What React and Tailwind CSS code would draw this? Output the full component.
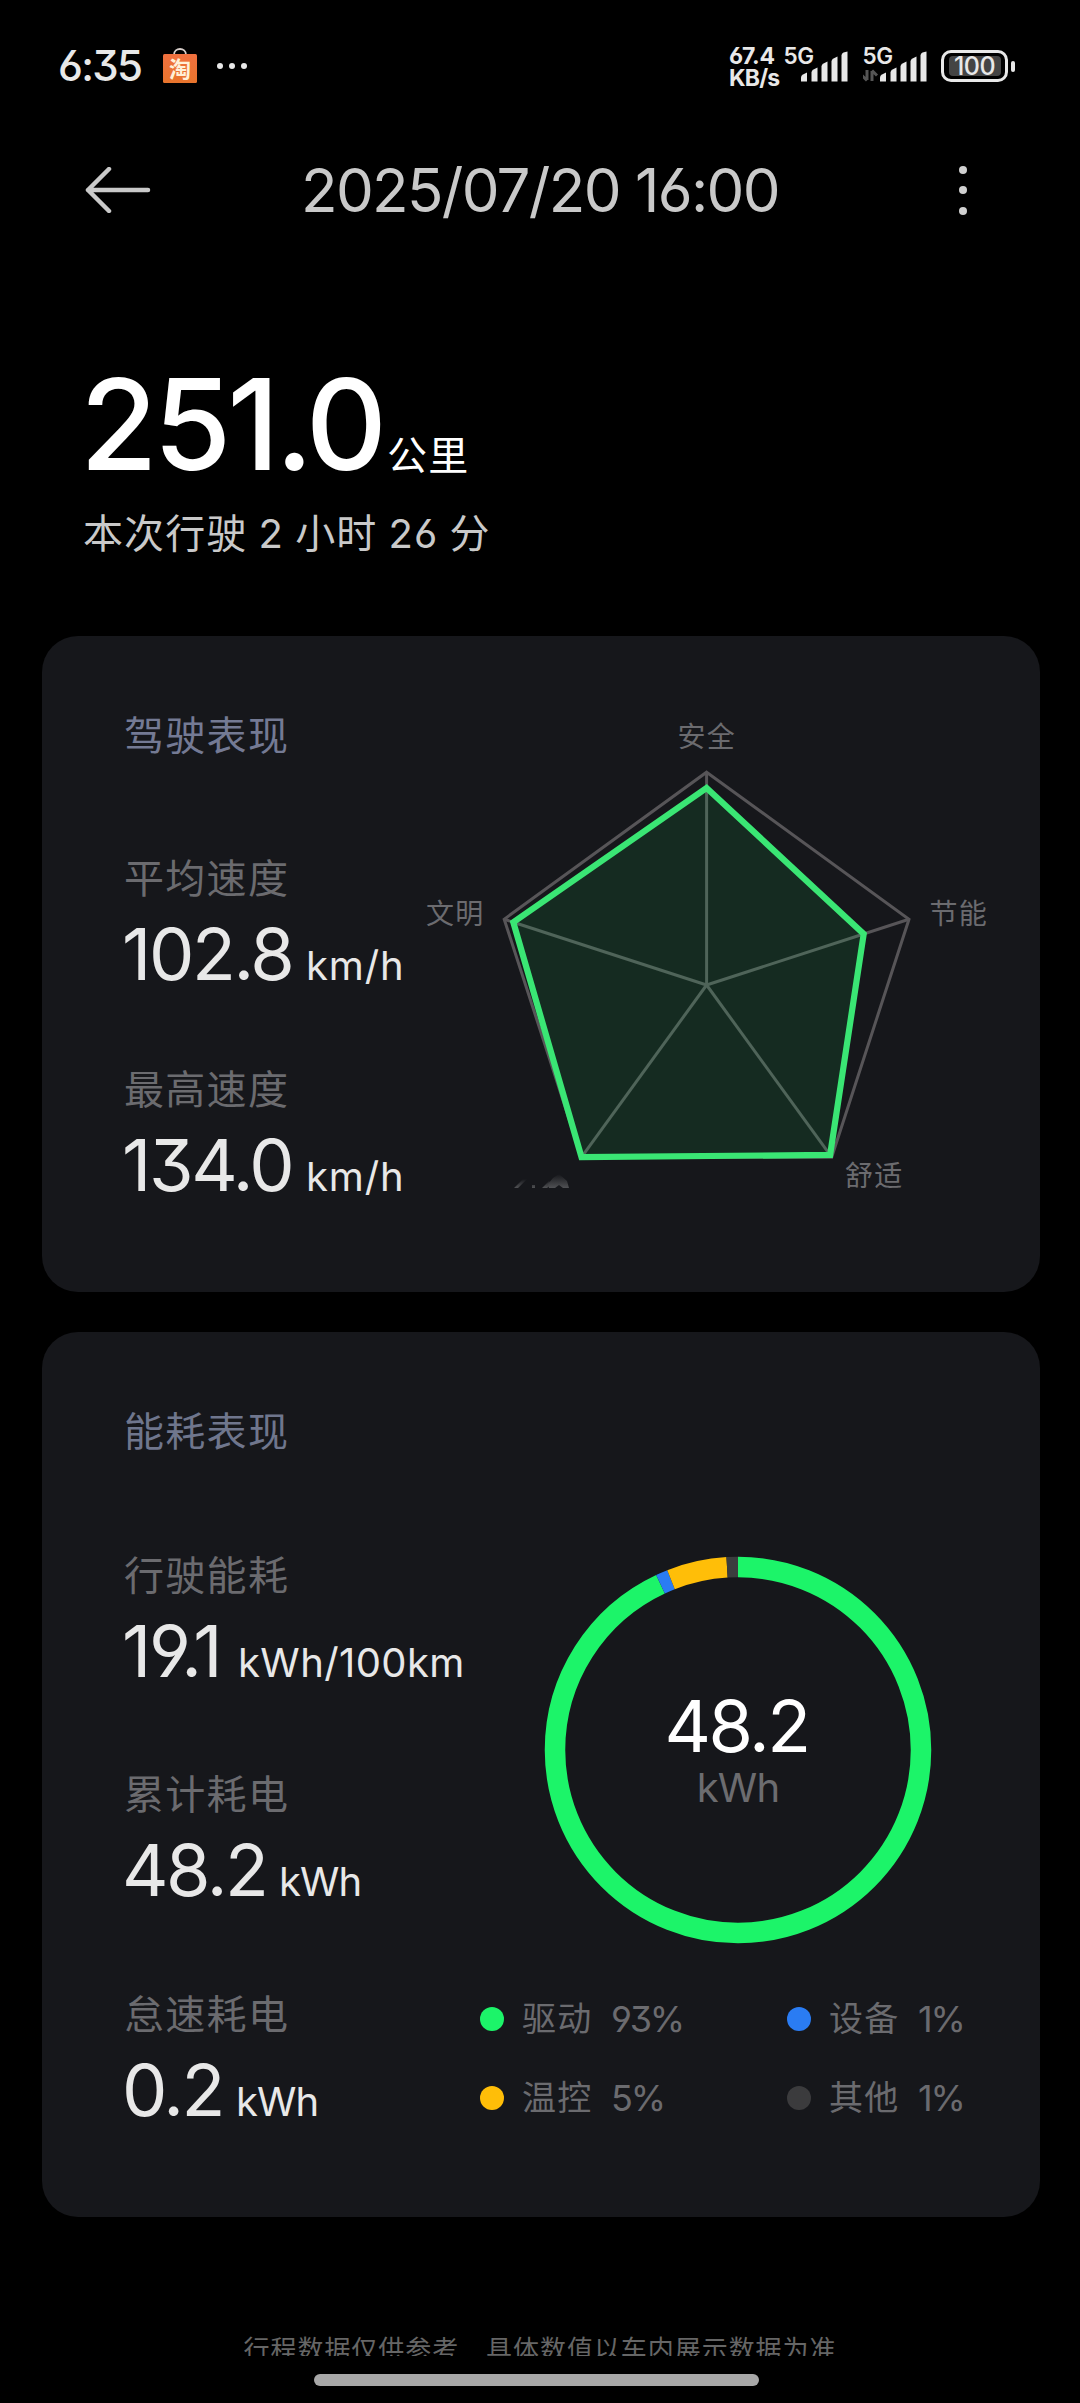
const FONT = "font-['Inter','Noto_Sans_CJK_SC',sans-serif]";

const RADAR = { cx: 286.6, cy: 285, r: 212.8 };
const SCORES = [0.926, 0.776, 0.987, 1, 0.955];

function radarPoint(index, ratio) {
  const a = ((-90 + index * 72) * Math.PI) / 180;
  return [
    RADAR.cx + Math.cos(a) * RADAR.r * ratio,
    RADAR.cy + Math.sin(a) * RADAR.r * ratio,
  ];
}

const ring = [0, 1, 2, 3, 4];
const toPoints = (pts) => pts.map((p) => p.map((v) => v.toFixed(1)).join(',')).join(' ');

function Radar() {
  return (
    <svg width="600" height="520" viewBox="0 0 600 520" className="shrink-0">
      <g stroke="#575558" strokeWidth="3" fill="none">
        <polygon points={toPoints(ring.map((i) => radarPoint(i, 1)))} />
        {ring.map((i) => {
          const [x, y] = radarPoint(i, 1);
          return <line key={i} x1={RADAR.cx} y1={RADAR.cy} x2={x} y2={y} />;
        })}
      </g>
      <polygon points={toPoints(ring.map((i) => radarPoint(i, SCORES[i])))} fill="#152b21" />
      <g stroke="#4f6459" strokeWidth="3">
        {ring.map((i) => {
          const [x, y] = radarPoint(i, SCORES[i]);
          return <line key={i} x1={RADAR.cx} y1={RADAR.cy} x2={x} y2={y} />;
        })}
      </g>
      <polygon
        points={toPoints(ring.map((i) => radarPoint(i, SCORES[i])))}
        fill="none"
        stroke="#3ae674"
        strokeWidth="6.2"
      />
      <g fill="#6b6b6f" fontSize="28" letterSpacing="1.3">
        <text x="257.5" y="46.5">安全</text>
        <text x="509.5" y="223.5">节能</text>
        <text x="425" y="486">舒适</text>
        <text x="6" y="223.5">文明</text>
      </g>
      <defs>
        <linearGradient id="fade" x1="0" y1="0" x2="0" y2="1">
          <stop offset="0" stopColor="#16171b" />
          <stop offset="1" stopColor="#505154" />
        </linearGradient>
      </defs>
      <g fill="url(#fade)">
        <path d="M94 488l9-9 4 0-9 9zM112 488v-3h3v3zM122 488l7-7 3 3-5 4z" />
        <path d="M128 484l5-6 6-4 8 7 2 7h-6l-4-3-4 3h-6z" />
      </g>
    </svg>
  );
}

const C = 2 * Math.PI * 183;
const SEGMENTS = [
  { from: 0, share: 93, color: '#1cf469' },
  { from: 93, share: 1, color: '#2a7cf3' },
  { from: 94, share: 5, color: '#ffbe08' },
  { from: 99, share: 1, color: '#3b3d3e' },
];

function Donut() {
  return (
    <div className="relative h-[388px] w-[388px]">
      <svg width="388" height="388" viewBox="0 0 388 388">
        <g transform="rotate(-90 194 194)" fill="none" strokeWidth="20.5">
          {SEGMENTS.map((s) => (
            <circle
              key={s.from}
              cx="194"
              cy="194"
              r="183"
              stroke={s.color}
              strokeDasharray={`${(C * s.share) / 100} ${C}`}
              strokeDashoffset={(-C * s.from) / 100}
            />
          ))}
        </g>
      </svg>
      <div className="absolute inset-0 flex flex-col items-center pt-[134px]">
        <div className="mr-[3px] text-[72px] leading-[72px] tracking-[-2.500px] text-white">48.2</div>
        <div className="mt-[2px] text-[40px] leading-[48px] tracking-[-0.8px] text-[#6c6c6f]">kWh</div>
      </div>
    </div>
  );
}

function Label({ children, className = 'text-[#6b6b6f]' }) {
  return (
    <div className={`text-[40px] leading-[48px] tracking-[1.3px] ${className}`}>
      {children}
    </div>
  );
}

function Metric({ label, value, unit, width, unitClass = '', className = '' }) {
  return (
    <div className={className}>
      <Label>{label}</Label>
      <div className="mt-[15px] -ml-[2px] flex h-[72px] items-baseline whitespace-nowrap leading-[72px] text-[#e8e8e8]">
        <span className={`text-[72px] tracking-[-2.400px] ${width}`}>{value}</span>
        <span className={`text-[40px] ${unitClass}`}>{unit}</span>
      </div>
    </div>
  );
}

function Legend({ dot, name, value }) {
  return (
    <div className="flex h-[79px] items-center text-[34px] text-[#6b6b6f]">
      <span className={`h-6 w-6 rounded-full ${dot}`} />
      <span className="ml-[18px] w-[89px] tracking-[1.3px]">{name}</span>
      <span className="text-[36px] tracking-[-2.200px]">{value}</span>
    </div>
  );
}

function Signal({ arrows }) {
  return (
    <svg width="67" height="48" viewBox="0 -8 67 48" className="-mt-[8px] shrink-0">
      <text x="-0.5" y="19.500" fontSize="22.5" fontWeight="600" fill="#e8e8e8" letterSpacing="-0.4">5G</text>
      <g fill="#e8e8e8">
        <path d="M17 37.500v-4q0-2 2-3l4-2v9z" />
        <path d="M27.500 37.500v-9q0-2 2-3l4-2v14z" />
        <path d="M37.500 37.500v-15q0-2 2-3l4-2v20z" />
        <path d="M47.500 37.500v-20q0-2 2-3l4-2v25z" />
        <path d="M57.500 37.500v-26q0-2 2-3l4-1v30z" />
      </g>
      {arrows && (
        <path d="M4 26v10M4 36.500l-5-5M9 37v-10M9 26.500l5 5" stroke="#555" strokeWidth="3" fill="none" />
      )}
    </svg>
  );
}

function StatusBar() {
  return (
    <div className="flex h-[132px] items-start pt-[44px] pl-[58px] text-[#e8e8e8]">
      <div className="w-[105px] text-[42px] leading-[44px] font-medium tracking-[-1.700px]">6:35</div>
      <svg width="34" height="40" viewBox="0 0 34 40">
        <defs>
          <linearGradient id="bag" x1="0" y1="0" x2="0" y2="1">
            <stop offset="0" stopColor="#f0703f" />
            <stop offset="1" stopColor="#e8742c" />
          </linearGradient>
        </defs>
        <path d="M11 11c0-8 12-8 12 0" fill="none" stroke="#d8cfcb" strokeWidth="1.800" />
        <rect y="10" width="34" height="29" rx="1.500" fill="url(#bag)" />
        <text x="6" y="33" fontSize="22" fontWeight="700" fill="#fff0d8">淘</text>
      </svg>
      <div className="mt-[19px] ml-[20px] flex gap-[6px]">
        <i className="h-[6px] w-[6px] rounded-full bg-[#e8e8e8]" />
        <i className="h-[6px] w-[6px] rounded-full bg-[#e8e8e8]" />
        <i className="h-[6px] w-[6px] rounded-full bg-[#e8e8e8]" />
      </div>
      <div className="mt-[1px] ml-[482px] w-[55px] text-[23px] leading-[22px] font-bold">
        <div className="tracking-[-0.300px]">67.4</div>
        <div className="tracking-[-0.800px]">KB/s</div>
      </div>
      <Signal />
      <div className="ml-[12px] flex"><Signal arrows /></div>
      <div className="mt-[6px] ml-[11px] flex items-center gap-[3px]">
        <div className="flex h-[32px] w-[67px] items-center justify-center rounded-[10px] border-[3.500px] border-[#e8e8e8]">
          <div className="flex h-[20px] w-[52px] items-center justify-center rounded-[4px] bg-[#444] text-[25px] leading-[20px] font-medium tracking-[-0.500px]">
            100
          </div>
        </div>
        <div className="h-[11px] w-[4px] rounded-[2px] bg-[#e8e8e8]" />
      </div>
    </div>
  );
}

export default function App() {
  return (
    <div className={`flex h-[2403px] w-[1080px] flex-col overflow-hidden bg-black [font-feature-settings:'cv03','cv04','cv09'] ${FONT}`}>
      <StatusBar />
      <header className="flex h-[116px] items-center pl-[85px]">
        <svg width="66" height="46" viewBox="0 0 66 46" fill="none" stroke="#c9c9c9" strokeWidth="4.500" strokeLinecap="round" strokeLinejoin="round">
          <path d="M24 2L3 23l21 21M3 23h60" />
        </svg>
        <h1 className="ml-[150px] w-[658px] text-[60px] leading-[72px] tracking-[-1.700px] whitespace-nowrap text-[#c9c9c9]">
          2025/07/20 16:00
        </h1>
        <div className="flex flex-col gap-[12.500px]">
          <i className="h-[8px] w-[8px] rounded-full bg-[#d0d0d0]" />
          <i className="h-[8px] w-[8px] rounded-full bg-[#d0d0d0]" />
          <i className="h-[8px] w-[8px] rounded-full bg-[#d0d0d0]" />
        </div>
      </header>

      <section className="h-[388px] pt-[112px] pl-[80px] text-white">
        <div className="flex h-[128px] items-baseline leading-[128px]">
          <span className="w-[307px] text-[126px] font-medium tracking-[-4.200px]">251.0</span>
          <span className="text-[40px] tracking-[1.300px]">公里</span>
        </div>
        <div className="mt-[22px] ml-[3px] text-[40px] leading-[48px] tracking-[1.100px] text-[#c9c9c9] [word-spacing:-1.200px]">
          本次行驶 2 小时 26 分
        </div>
      </section>

      <section className="mr-[40px] ml-[42px] flex h-[656px] rounded-[36px] bg-[#16171b]">
        <div className="w-[378px] shrink-0 pt-[76px] pl-[82px]">
          <Label className="text-[#747a94]">驾驶表现</Label>
          <Metric className="mt-[95px]" label="平均速度" value="102.8" unit="km/h" width="w-[184px]" unitClass="tracking-[0.900px]" />
          <Metric className="mt-[76px]" label="最高速度" value="134.0" unit="km/h" width="w-[184px]" unitClass="tracking-[0.900px]" />
        </div>
        <div className="pt-[64px]"><Radar /></div>
      </section>

      <section className="mt-[40px] mr-[40px] ml-[42px] flex h-[885px] rounded-[36px] bg-[#16171b]">
        <div className="w-[438px] shrink-0 pt-[76px] pl-[82px]">
          <Label className="text-[#6f768d]">能耗表现</Label>
          <Metric className="mt-[96px]" label="行驶能耗" value="19.1" unit="kWh/100km" width="w-[116px]" unitClass="tracking-[0.400px]" />
          <Metric className="mt-[84px]" label="累计耗电" value="48.2" unit="kWh" width="w-[157px]" unitClass="tracking-[-0.900px]" />
          <Metric className="mt-[85px]" label="怠速耗电" value="0.2" unit="kWh" width="w-[114px]" unitClass="tracking-[-0.900px]" />
        </div>
        <div className="pt-[224px]">
          <div className="pl-[64px]"><Donut /></div>
          <div className="mt-[35px] grid grid-cols-[307px_200px]">
            <Legend dot="bg-[#1cf469]" name="驱动" value="93%" />
            <Legend dot="bg-[#2a7cf3]" name="设备" value="1%" />
            <Legend dot="bg-[#ffbe08]" name="温控" value="5%" />
            <Legend dot="bg-[#3b3b3d]" name="其他" value="1%" />
          </div>
        </div>
      </section>

      <footer className="flex flex-col items-center pt-[114px]">
        <div className="h-[25px] overflow-hidden text-[26px] leading-[38px] tracking-[0.950px] whitespace-nowrap text-[#666]">
          行程数据仅供参考<span className="relative top-[4px]">，</span>具体数值以车内展示数据为准
        </div>
        <div className="mt-[18px] mr-[7px] h-[12px] w-[445px] rounded-full bg-[#a8a8a8]" />
      </footer>
    </div>
  );
}
